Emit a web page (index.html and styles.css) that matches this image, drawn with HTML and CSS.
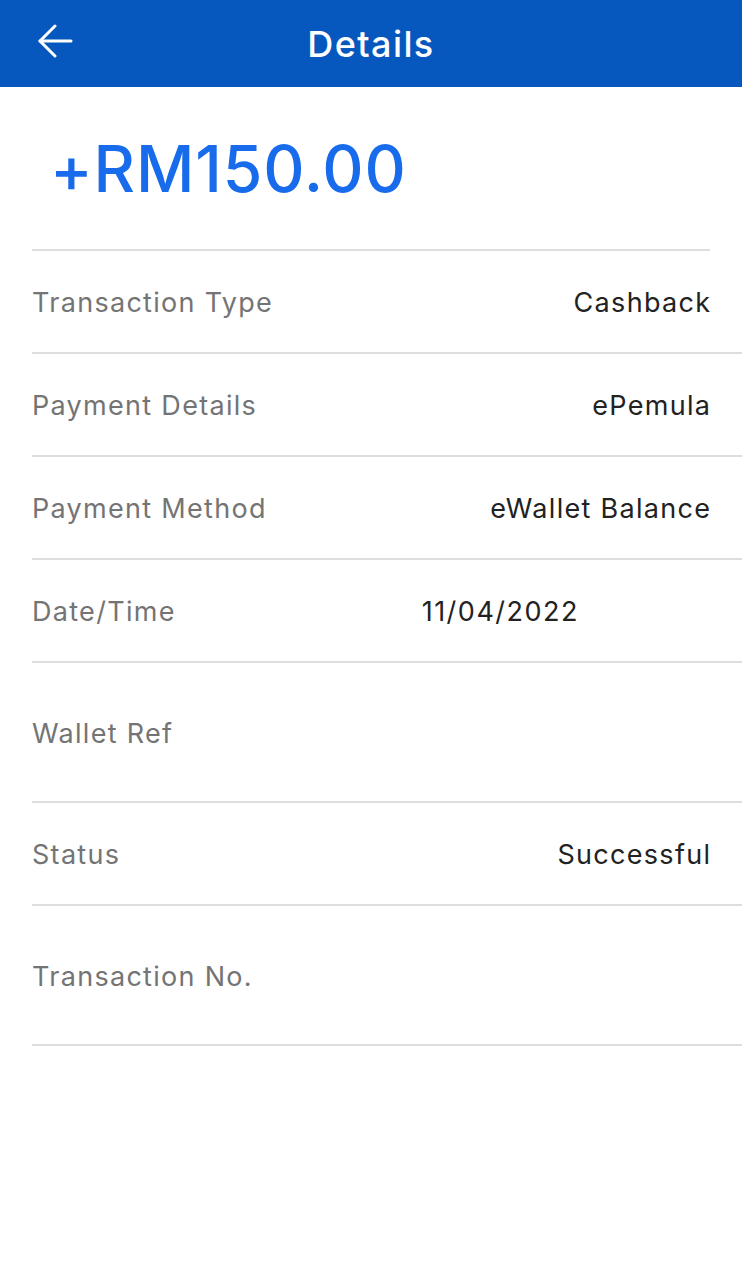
FILE: index.html
```html
<!DOCTYPE html>
<html>
<head>
<meta charset="utf-8">
<link rel="stylesheet" href="styles.css">
</head>
<body>
<header class="topbar">
  <button class="back" aria-label="Back">
    <svg width="36" height="34" viewBox="0 0 36 34" fill="none" stroke="#fff" stroke-width="3" stroke-linecap="round" stroke-linejoin="round">
      <path d="M34 17H3"/>
      <path d="M18 2L3 17L18 32"/>
    </svg>
  </button>
  <h1 class="title">Details</h1>
</header>
<main class="content">
  <div class="amount-box">
    <div class="amount">+RM150.00</div>
  </div>
  <ul class="rows">
    <li class="row"><span class="label">Transaction Type</span><span class="value">Cashback</span></li>
    <li class="row"><span class="label">Payment Details</span><span class="value">ePemula</span></li>
    <li class="row"><span class="label">Payment Method</span><span class="value">eWallet Balance</span></li>
    <li class="row"><span class="label">Date/Time</span><span class="value value-date">11/04/2022</span></li>
    <li class="row row-tall"><span class="label">Wallet Ref</span><span class="value"></span></li>
    <li class="row"><span class="label">Status</span><span class="value">Successful</span></li>
    <li class="row row-tall"><span class="label">Transaction No.</span><span class="value"></span></li>
  </ul>
</main>
</body>
</html>
```
FILE: styles.css
```css
* { box-sizing: border-box; }
html, body { margin: 0; padding: 0; background: #fff; }
body { font-family: Inter, Roboto, "Noto Sans", "Liberation Sans", sans-serif; width: 742px; height: 1280px; overflow: hidden; }

.topbar {
  height: 87px;
  background: #0758be;
  display: flex;
  align-items: center;
  justify-content: center;
  position: relative;
}
.back {
  position: absolute;
  left: 37px;
  top: 24px;
  background: none;
  border: 0;
  padding: 0;
  display: flex;
}
.title {
  margin: 0;
  color: #fff;
  font-size: 36px;
  font-weight: 500;
  letter-spacing: 1.4px;
}

.content { padding-left: 32px; }
.amount-box {
  height: 164px;
  margin-right: 32px;
  border-bottom: 2px solid #dedede;
  padding-left: 18px;
  padding-top: 42px;
}
.amount {
  color: #186cec;
  font-size: 64px;
  font-weight: 500;
  line-height: 80px;
  letter-spacing: 0.9px;
}

.rows { list-style: none; margin: 0; padding: 0; }
.row {
  height: 103px;
  border-bottom: 2px solid #dedede;
  display: flex;
  align-items: center;
  justify-content: space-between;
  padding-right: 32px;
  padding-top: 2px;
  font-size: 27px;
  letter-spacing: 1.3px;
}
.row-tall { height: 140px; }
.label { color: #747474; }
.value { color: #222; margin-right: -1.3px; }
.value-date { margin-right: 131px; letter-spacing: 1.5px; }
```
